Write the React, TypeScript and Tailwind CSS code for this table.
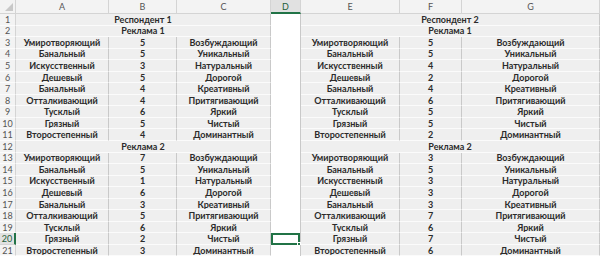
import React from "react";

type Row = { n: number; merged?: [string, string]; l?: string[]; r?: string[] };

const left = [
  ["Умиротворяющий", "5", "Возбуждающий"],
  ["Банальный", "5", "Уникальный"],
  ["Искусственный", "3", "Натуральный"],
  ["Дешевый", "5", "Дорогой"],
  ["Банальный", "4", "Креативный"],
  ["Отталкивающий", "4", "Притягивающий"],
  ["Тусклый", "6", "Яркий"],
  ["Грязный", "5", "Чистый"],
  ["Второстепенный", "4", "Доминантный"],
  ["Умиротворяющий", "7", "Возбуждающий"],
  ["Банальный", "5", "Уникальный"],
  ["Искусственный", "1", "Натуральный"],
  ["Дешевый", "6", "Дорогой"],
  ["Банальный", "3", "Креативный"],
  ["Отталкивающий", "5", "Притягивающий"],
  ["Тусклый", "6", "Яркий"],
  ["Грязный", "2", "Чистый"],
  ["Второстепенный", "3", "Доминантный"],
];
const right = [
  ["Умиротворяющий", "5", "Возбуждающий"],
  ["Банальный", "5", "Уникальный"],
  ["Искусственный", "4", "Натуральный"],
  ["Дешевый", "2", "Дорогой"],
  ["Банальный", "4", "Креативный"],
  ["Отталкивающий", "6", "Притягивающий"],
  ["Тусклый", "5", "Яркий"],
  ["Грязный", "5", "Чистый"],
  ["Второстепенный", "2", "Доминантный"],
  ["Умиротворяющий", "3", "Возбуждающий"],
  ["Банальный", "5", "Уникальный"],
  ["Искусственный", "3", "Натуральный"],
  ["Дешевый", "3", "Дорогой"],
  ["Банальный", "3", "Креативный"],
  ["Отталкивающий", "7", "Притягивающий"],
  ["Тусклый", "6", "Яркий"],
  ["Грязный", "7", "Чистый"],
  ["Второстепенный", "6", "Доминантный"],
];

const rows: Row[] = [];
rows.push({ n: 1, merged: ["Респондент 1", "Респондент 2"] });
rows.push({ n: 2, merged: ["Реклама 1", "Реклама 1"] });
for (let i = 0; i < 9; i++) rows.push({ n: 3 + i, l: left[i], r: right[i] });
rows.push({ n: 12, merged: ["Реклама 2", "Реклама 2"] });
for (let i = 9; i < 18; i++) rows.push({ n: 4 + i, l: left[i], r: right[i] });

const cell =
  "bg-[#efefef] border-b border-b-[#fbfbfb] border-r border-r-[#c9c9c9] flex items-center justify-center overflow-hidden whitespace-nowrap";

export default function App() {
  return (
    <div
      className="w-[600px] h-[257px] overflow-hidden bg-white text-[#2b2b2b] font-bold text-[9px] leading-none"
      style={{ fontFamily: 'Lato, "Liberation Sans", Arial, sans-serif' }}
    >
      <div className="grid grid-cols-[16px_93px_68px_94px_30px_99px_62px_138px] grid-rows-[14px_repeat(21,11.55px)]">
        <div className="relative bg-[#f3f3f3] border-r border-b border-[#d4d4d4]">
          <div className="absolute right-[2px] bottom-[2px] w-0 h-0 border-l-[8px] border-l-transparent border-b-[8px] border-b-[#c8c8c8]" />
        </div>
        {["A", "B", "C", "D", "E", "F", "G"].map((c) => (
          <div
            key={c}
            className={
              c === "D"
                ? "bg-[#e1e1e1] border-r border-r-[#d4d4d4] border-b-2 border-b-[#217346] flex items-center justify-center font-normal text-[#1e5e3a]"
                : "bg-[#f3f3f3] border-r border-r-[#d4d4d4] border-b border-b-[#d4d4d4] flex items-center justify-center font-normal text-[#555]"
            }
          >
            {c}
          </div>
        ))}
        {rows.map((row) => (
          <React.Fragment key={row.n}>
            <div
              className={
                row.n === 20
                  ? "bg-[#e1e1e1] border-r-2 border-r-[#217346] border-b border-b-[#d4d4d4] flex items-center justify-center font-normal text-[#1e5e3a]"
                  : "bg-[#f3f3f3] border-r border-r-[#d4d4d4] border-b border-b-[#fbfbfb] flex items-center justify-center font-normal text-[#555]"
              }
            >
              {row.n}
            </div>
            {row.merged ? (
              <div className={cell + " col-span-3"}>{row.merged[0]}</div>
            ) : (
              <>
                <div className={cell}>{row.l![0]}</div>
                <div className={cell}>{row.l![1]}</div>
                <div className={cell}>{row.l![2]}</div>
              </>
            )}
            <div className="relative bg-white border-r border-r-[#c9c9c9]">
              {row.n === 20 && (
                <div className="absolute inset-0 border-2 border-[#217346]">
                  <div className="absolute -right-[3px] -bottom-[3px] w-[4px] h-[4px] bg-[#217346] border border-white" />
                </div>
              )}
            </div>
            {row.merged ? (
              <div className={cell + " col-span-3"}>{row.merged[1]}</div>
            ) : (
              <>
                <div className={cell}>{row.r![0]}</div>
                <div className={cell}>{row.r![1]}</div>
                <div className={cell}>{row.r![2]}</div>
              </>
            )}
          </React.Fragment>
        ))}
      </div>
    </div>
  );
}
